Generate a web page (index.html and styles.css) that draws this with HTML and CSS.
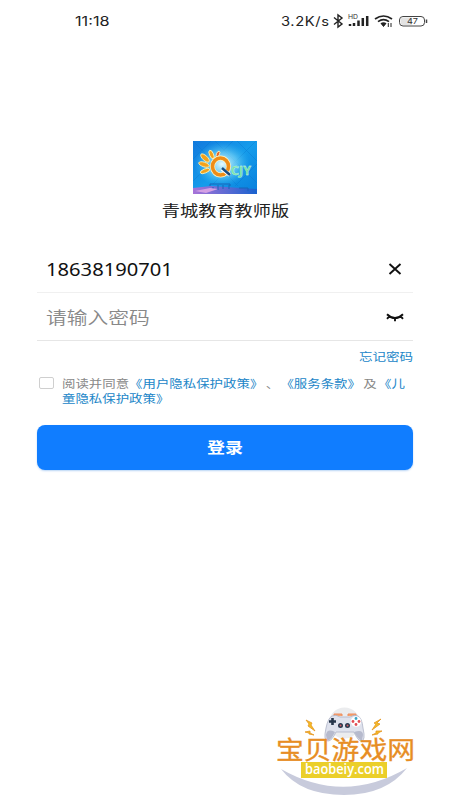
FILE: index.html
```html
<!DOCTYPE html>
<html lang="zh-CN">
<head>
<meta charset="utf-8">
<title>青城教育教师版</title>
<link rel="stylesheet" href="styles.css">
</head>
<body>
<main class="screen">
  <header class="status">
    <span class="time">11:18</span>
    <span class="speed">3.2K/s</span>
    <svg class="status-icons" width="97" height="16" viewBox="0 0 97 16">
      <path d="M2 4.500l8 6.500-4 3V2l4 3-8 6.500" fill="none" stroke="#222" stroke-width="1.400"/>
      <text x="16" y="6" class="hd" textLength="10" lengthAdjust="spacingAndGlyphs">HD</text>
      <path d="M18 11v2M22 10v3M26.500 7.500V13M30.800 5V13M35.200 3V13" stroke="#222" stroke-width="2.500"/>
      <path d="M43 6q8.500-6 17 0M46 8.600q5.500-4 11 0M49 11q2.500-1.800 5 0" fill="none" stroke="#222" stroke-width="1.700"/>
      <path d="M50 11.500h3l-1.500 2zM56.300 10v4M59 10v4" fill="#222" stroke="#222" stroke-width="1"/>
      <rect x="67.500" y="3.500" width="25" height="9.500" rx="3.500" fill="#fff" stroke="#444"/>
      <path d="M71 4.500h9v7.500h-9q-2.500 0-2.500-2.500v-2.500q0-2.500 2.500-2.500z" fill="#e3e3e3"/>
      <path d="M94.500 6.500v3.500" stroke="#444" stroke-width="1.500"/>
      <text x="75" y="11" class="level" textLength="11" lengthAdjust="spacingAndGlyphs">47</text>
    </svg>
  </header>

  <section class="brand">
    <svg class="logo" width="64" height="53" viewBox="0 0 64 53">
      <defs>
        <linearGradient id="sky" x1="0" y1="0" x2="1" y2="1">
          <stop offset="0" stop-color="#1279dd"/><stop offset=".5" stop-color="#159ceb"/><stop offset="1" stop-color="#087fdc"/>
        </linearGradient>
        <radialGradient id="glow"><stop offset="0" stop-color="#e8fcff"/><stop offset=".55" stop-color="#79d5f6" stop-opacity=".65"/><stop offset="1" stop-color="#36b5ee" stop-opacity="0"/></radialGradient>
        <linearGradient id="ground"><stop offset="0" stop-color="#a873d8"/><stop offset="1" stop-color="#1762cf"/></linearGradient>
      </defs>
      <rect width="64" height="53" fill="url(#sky)"/>
      <path d="M0 18L18 0M0 40L40 0M20 43L63 0M42 45L64 23M0 0l45 45M22 0l42 42M44 0l20 20" stroke="#0876cf" stroke-width=".6" opacity=".6"/>
      <ellipse cx="29" cy="23" rx="28" ry="22" fill="url(#glow)"/>
      <path d="M0 47l18-2 46 3v5H0z" fill="url(#ground)"/>
      <path d="M17 45v-2h20v2M20 46v3M25 44v5M30 44v4M36 44v4M46 47h9v3" stroke="#1765b9" fill="none"/>
      <path d="M2 50l15-3 8 1-12 4z" fill="#d4a0e4"/>
      <g fill="#f3a11b" stroke="#fff6b8" stroke-width=".8">
        <ellipse cx="12" cy="30" rx="5" ry="2" transform="rotate(-22 12 30)"/>
        <ellipse cx="11" cy="23.500" rx="5.500" ry="2.300" transform="rotate(18 11 23.500)"/>
        <ellipse cx="12" cy="17" rx="5.500" ry="2.400" transform="rotate(43 12 17)"/>
        <ellipse cx="18.500" cy="13.500" rx="4.500" ry="2" transform="rotate(66 18.500 13.500)"/>
        <ellipse cx="25" cy="13" rx="3" ry="1.500" fill="#e9652c" transform="rotate(-65 25 13)"/>
      </g>
      <ellipse cx="27.500" cy="25.500" rx="8" ry="8.500" fill="none" stroke="#fff5c5" stroke-width="5"/>
      <ellipse cx="27.500" cy="25.500" rx="8" ry="8.500" fill="none" stroke="#ee8d18" stroke-width="3.600"/>
      <path d="M29 28l8 6" stroke="#fff" stroke-width="4"/><path d="M29 27l8 7" stroke="#194e82" stroke-width="2.500"/>
      <text x="38" y="34" class="logo-text" textLength="20" lengthAdjust="spacingAndGlyphs">CJY</text>
    </svg>
    <h1 class="app-name">青城教育教师版</h1>
  </section>

  <form class="login">
    <div class="field">
      <span class="phone">18638190701</span>
      <svg width="14" height="12" viewBox="0 0 14 12"><path d="M1.500 1l11 10M12.500 1l-11 10" stroke="#111" stroke-width="1.900"/></svg>
    </div>
    <div class="field password">
      <span class="placeholder">请输入密码</span>
      <svg class="eye" width="18" height="9" viewBox="0 0 18 9"><path d="M1 1.200Q9 9 17 1.200M3.600 3L1 5.800M9 5v3.300M14.400 3L17 5.800" fill="none" stroke="#111" stroke-width="1.900"/></svg>
    </div>
    <div class="forgot-row"><a class="forgot">忘记密码</a></div>
    <div class="agreement">
      <span class="checkbox"></span>
      <p class="terms">阅读并同意<a>《用户隐私保护政策》</a><span class="comma">、</span><a class="service">《服务条款》</a><span class="and">及</span><a>《儿<br>童隐私保护政策》</a></p>
    </div>
    <button class="submit" type="button"><span class="submit-text">登录</span></button>
  </form>

  <footer class="watermark">
    <svg width="150" height="96" viewBox="270 704 150 96">
      <circle cx="344.500" cy="723" r="15.500" fill="#ebecee"/>
      <path d="M281 769Q344 805 407 768Q386 795 344 795Q301 795 281 769Z" fill="#c8cbdc"/>
      <path d="M306 720l6 3-1 2 4 6-7-5 1-2zM305 732l5-1v2l4 2-5-1v-1zM381 719l-7 4 2 1-4 6 8-6-3-1zM382 731h-6v2l-4 2 6-1v-1z" fill="#f5bd24" stroke="#e59622" stroke-width=".8"/>
      <path d="M334 716v-2h8v2M348 716v-2h8v2" fill="#f6a56f" stroke="#ed8c60"/>
      <path d="M332 716Q336 714 340 717H350Q354 714 358 716Q362 718 363 728Q366 741 361 741Q358 741 354 732H336Q332 741 328 741Q323 741 326 728Q328 718 332 716Z" fill="#dfe2ed" stroke="#a8adc1" stroke-width=".7"/>
      <path d="M326 735Q327 728 335 732Q330 742 327 740ZM363 735Q363 729 354 732Q360 742 362 740Z" fill="#b6bacd"/>
      <path d="M332.500 718v7M329 721.500h7" stroke="#26364a" stroke-width="2.600"/>
      <g fill="#28394e"><circle cx="340.500" cy="725.500" r="2.500"/><circle cx="347.500" cy="725.500" r="2.500"/></g>
      <circle cx="340.500" cy="725.500" r="1" fill="#d25b63"/><circle cx="347.500" cy="725.500" r="1" fill="#d25b63"/>
      <circle cx="356" cy="721.500" r="5.200" fill="#fff"/>
      <circle cx="356" cy="718.500" r="1.400" fill="#39a6c8"/><circle cx="356" cy="724.500" r="1.400" fill="#e24c54"/><circle cx="353" cy="721.500" r="1.400" fill="#e24c54"/><circle cx="359" cy="721.500" r="1.400" fill="#e24c54"/>
      <text x="276" y="758.500" class="site" textLength="139" lengthAdjust="spacingAndGlyphs">宝贝游戏网</text>
      <rect x="301" y="762" width="86" height="16" fill="#ebcf2a"/>
      <text x="305" y="774" class="domain" textLength="79" lengthAdjust="spacingAndGlyphs">baobeiy.com</text>
    </svg>
  </footer>
</main>
</body>
</html>
```
FILE: styles.css
```css
* { box-sizing: border-box; }
body { margin: 0; background: #fff; font-family: "Noto Sans", "Noto Sans CJK SC", sans-serif; color: #222; text-spacing-trim: space-all; }
.screen { width: 450px; height: 800px; display: flex; flex-direction: column; overflow: hidden; }
.status { height: 42px; padding: 1px 17px 0 75px; display: flex; align-items: center; }
.time, .speed { font-family: Inter, sans-serif; font-size: 12px; line-height: 16px; transform-origin: left; white-space: nowrap; }
.time { width: 206px; font-size: 12.5px; transform: scaleX(1.3); }
.speed { width: 51px; font-size: 12.5px; letter-spacing: .5px; transform: scaleX(1.18); }
.status-icons { flex: none; margin-bottom: 2px; }
.hd { font: 6px Inter, sans-serif; fill: #333; }
.level { font: 8px Inter, sans-serif; fill: #333; }
.brand { display: flex; flex-direction: column; align-items: center; padding-top: 99px; }
.logo { display: block; }
.logo-text { font: bold 12px "Open Sans", sans-serif; fill: #6ce0a1; stroke: #e0fff0; stroke-width: .3px; }
.app-name { margin: 6px 0 1px 1px; font-size: 15px; line-height: 20px; font-weight: 400; transform: scaleX(1.215); font-family: "Noto Sans CJK SC", sans-serif; }
.login { margin: 24px 37px 0; display: flex; flex-direction: column; }
.field { height: 48px; padding: 0 11px 0 9px; border-bottom: 1px solid #f0f0f0; display: flex; align-items: center; justify-content: space-between; }
.password { padding: 0 9px 0; border-color: #e6e6e6; }
.eye { margin-top: 2px; }
.phone { font-size: 18px; line-height: 24px; transform: scaleX(1.12); transform-origin: left; color: #111; }
.placeholder { font-family: "Noto Sans CJK SC", sans-serif; font-size: 17px; line-height: 24px; transform: scaleX(1.22); transform-origin: left; color: #888; font-weight: 350; }
.forgot-row { display: flex; justify-content: flex-end; height: 35px; padding-top: 7px; }
.forgot { font: 11px/16px "Noto Sans CJK SC", sans-serif; color: #2186c8; transform: scaleX(1.23); transform-origin: right; }
.agreement { display: flex; height: 49px; padding-left: 2px; }
.checkbox { width: 15px; height: 12px; margin-top: 1px; border: 1px solid #cfcfcf; border-radius: 2px; flex: none; }
.terms { margin: 0 0 0 8px; font: 11px/15px "Noto Sans CJK SC", sans-serif; color: #888; transform: scaleX(1.22); transform-origin: left; white-space: nowrap; }
.terms a { color: #2186c8; }
.comma { margin-left: 2px; }
.service { margin-left: 1px; }
.and { margin: 0 1px 0 2px; }
.submit { height: 45px; padding: 0; border: 0; border-radius: 8px; background: #107dff; color: #fff; display: flex; align-items: center; justify-content: center; box-shadow: 0 1px 2px #b9d5f5; }
.submit-text { font: bold 15px/22px "Noto Sans CJK SC", sans-serif; padding-bottom: 2px; transform: scaleX(1.2); }
.watermark { margin-top: auto; padding-left: 270px; height: 96px; }
.watermark svg { display: block; }
.site { font: 400 25px "Noto Sans CJK SC", sans-serif; fill: #e78d24; stroke: #e78d24; stroke-width: .3px; }
.domain { font: 600 13.5px "Open Sans", sans-serif; fill: #fff; }
```
